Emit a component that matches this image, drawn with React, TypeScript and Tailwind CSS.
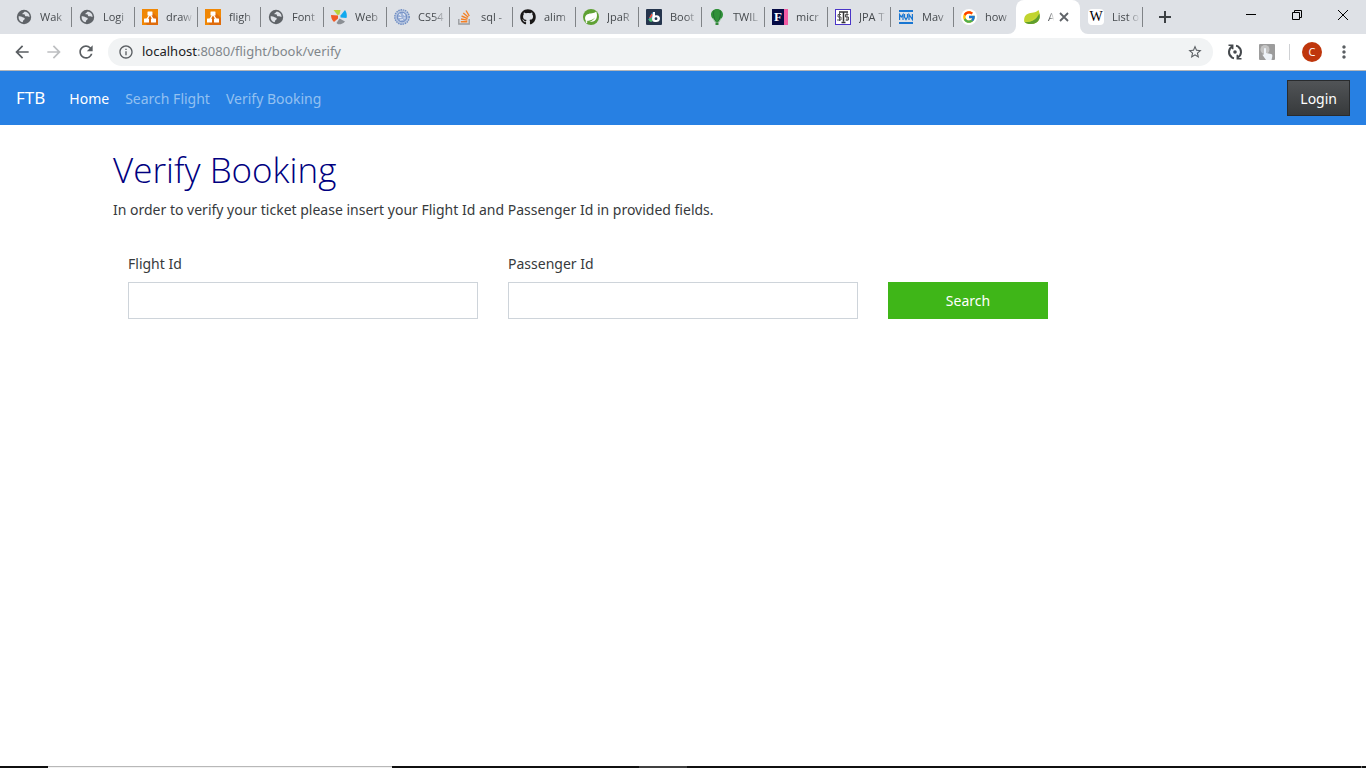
import React from "react";
import { FaGithub } from "react-icons/fa";
import { FcGoogle } from "react-icons/fc";
import { MdArrowBack, MdArrowForward, MdInfoOutline, MdMoreVert, MdRefresh, MdStarBorder } from "react-icons/md";

const GlobeIcon = () => (
  <svg viewBox="0 0 16 16" className="size-4">
    <circle cx="8" cy="8" r="7.2" fill="#5f6368" />
    <path d="M2.6 7.200c1.500.2 3 .1 4 1c.9.700 2 .3 2.200 1.500c.1 1-1.500 1-1.700 2c-.1.800-.1 1.300-.9 1.600C3.900 12.500 2.400 10.400 2.600 7.200z" fill="#dee1e6" />
    <path d="M8.200 2.800c1.600-.2 3.200.5 4.200 1.800c.9 1.100 1.100 2 1.100 3.300c-.8.400-1.200-.5-2-.6c-1-.1-2.200.3-2.500-.6c-.3-.7.300-1-.5-1.300c-1-.3-2 .2-2.200-.5c-.1-.8 1.700-.7 1.900-2.100z" fill="#dee1e6" />
  </svg>
);

const DrawIcon = () => (
  <svg viewBox="0 0 16 16" className="size-4">
    <path d="M0 0h16v16H0z" fill="#f08705" />
    <path d="M10 3l6 6v7H5l-2-3z" fill="#df6c0c" />
    <path d="M7.500 6L4.500 11M8.500 6l3 5" stroke="#fff" strokeWidth="1.400" />
    <rect x="5.500" y="2.500" width="5" height="4" rx=".5" fill="#fff" />
    <rect x="2" y="9.500" width="5" height="4" rx=".5" fill="#fff" />
    <rect x="9" y="9.500" width="5" height="4" rx=".5" fill="#fff" />
  </svg>
);

const WebIcon = () => (
  <svg viewBox="0 0 16 16" className="size-4">
    <path d="M2.500 1L9.500 1L8.500 5.500L6.500 6z" fill="#b9d438" />
    <path d="M9.500 6.500l4.500-5.500c1.800 2.700 2.200 5 1.500 8L9.500 8.500z" fill="#10a9ee" />
    <path d="M0 6l7 .5v3L3 13C1 11 0 9 0 6z" fill="#f25a25" />
    <path d="M8.500 9.500l5.500 3c-1.500 2-4 3-7 2.800L5.500 14z" fill="#8b8f94" />
  </svg>
);

const SealIcon = () => (
  <svg viewBox="0 0 16 16" className="size-4">
    <circle cx="8" cy="8" r="7.200" fill="#b9c7e0" stroke="#6e8dc4" strokeWidth="1.400" strokeDasharray="1.500 .8" />
    <circle cx="8" cy="8" r="4.800" fill="#9cb1d8" stroke="#5f80bd" strokeWidth=".8" />
    <path d="M5 5l2 1.500M9 4.500l2 2M4.500 8.500h3M9.500 9h2M6 11l3-.5" stroke="#e6ebf4" strokeWidth="1.200" />
  </svg>
);

const StackIcon = () => (
  <svg viewBox="0 0 16 16" className="size-4">
    <path d="M1.800 10v5h10.400v-5" fill="none" stroke="#9a9c9f" strokeWidth="1.400" />
    <path d="M3.800 12.700h6.500M4 10l6.400 1.100M4.600 7l6 2.600M6.300 4l5 4.200M9 1.500l3.300 5.500" stroke="#f48024" strokeWidth="1.400" />
  </svg>
);

const SpringIcon = () => (
  <svg viewBox="0 0 16 16" className="size-4">
    <circle cx="8" cy="8" r="8" fill="#5fa134" />
    <path d="M13.200 2.500c.7 2 1 3.700.6 5.500c-.7 3.800-3.500 4.900-6.300 4.700L3.800 13c4-.3 6.700-1.800 8.300-4.600C9.800 10.900 7 11.500 3 12.100C1.300 9.500 2 6.600 4.500 5.300c2.800-1.400 6.400-.3 8.700-2.800z" fill="#fff" />
    <circle cx="3.500" cy="13" r=".9" fill="#fff" />
  </svg>
);

const BootIcon = () => (
  <svg viewBox="0 0 16 16" className="size-4">
    <rect width="16" height="16" rx="1" fill="#25354d" />
    <path d="M6.500 3L2.500 10.500L4 12L7 9z" fill="#29a8e0" />
    <path d="M5.500 4.500L3 9l1.500.5L7 6z" fill="#f0503c" />
    <path d="M2.300 10.500l4-2v4.300H4z" fill="#52bd72" />
    <path d="M7 3h2v3.500c3-1 5 .5 5 3c0 2.700-2.300 4-5 3.500c-2 0-3-1-3-3z" fill="#fff" />
    <circle cx="10" cy="9.700" r="1.400" fill="#25354d" />
  </svg>
);

const BalloonIcon = () => (
  <svg viewBox="0 0 16 16" className="size-4">
    <path d="M8 0c3.500 0 6 2.500 6 5.800c0 2.900-2.500 5-4 7.200H6C4.500 10.800 2 8.700 2 5.800C2 2.500 4.500 0 8 0z" fill="#2f9139" />
    <path d="M5 1.500C3.800 5 5 9 6.700 13M11 1.500c1.200 3.500 0 7.500-1.700 11.500" stroke="#247130" fill="none" />
    <path d="M3.500 9l3 4M12.500 9l-3 4" stroke="#d0dfd4" strokeWidth=".7" />
    <path d="M6.500 13.300h3V16h-3z" fill="#33883b" />
  </svg>
);

const FIcon = () => (
  <span className="flex size-4 border-r-4 border-[#f25ba3] bg-[#050a45] pl-[2px] font-['Liberation_Serif',serif] text-[13px] leading-4 font-bold text-white">F</span>
);

const ScalesIcon = () => (
  <svg viewBox="0 0 16 16" className="size-4">
    <rect x=".5" y=".5" width="15" height="15" fill="#fff" stroke="#4a35c8" />
    <path d="M4 3h9M8.500 3v9.500M6.500 13.500h4" stroke="#333" strokeWidth="1.500" />
    <path d="M6 5.500H3v2.500h3v3H2M13.500 5.500h-3v2.500h3v3h-3M4.500 3v9M12 3v9" stroke="#555" strokeWidth="1" fill="none" />
  </svg>
);

const MavenIcon = () => (
  <svg viewBox="0 0 16 16" className="size-4">
    <path d="M1 2h14M1 14h14" stroke="#1976d2" strokeWidth="2" />
    <path d="M1.600 11V5.500L3.300 8L5 5.500V11M6.500 5v3L8 10.500L9.500 8V5M11 11V5.500l3.400 5V5" stroke="#1976d2" strokeWidth="1.200" fill="none" />
  </svg>
);

const GoogleIcon = () => (
  <span className="flex size-4 items-center justify-center rounded-full bg-white"><FcGoogle size={14} /></span>
);

const LeafIcon = () => (
  <svg viewBox="0 0 16 16" className="size-4">
    <path d="M14.500 1c1.300 3 1.800 6.500.8 9c-1.300 3.500-5 5.200-8.800 5c-2.500 0-5-1-6.200-2C-.3 9.500.5 6 4 4.700c3.500-1.300 7.500-.4 10.500-3.700z" fill="#c1d42f" />
    <path d="M15.300 4.500c.6 2.200.7 4 0 5.500c-1.300 3.500-5 5.200-8.800 5c-2.500 0-4.700-.8-5.700-1.800C8 13.200 12.500 10.500 15.300 4.500z" fill="#5f9e2f" />
    <path d="M.8 12.600c5-.3 9.200-2.300 12-6c-2 5-6 6.800-12 6z" fill="#c8d83a" />
  </svg>
);

const WikiIcon = () => (
  <span className="flex size-4 items-center justify-center rounded-sm bg-white font-['Liberation_Serif',serif] text-[14px] leading-4 text-black">W</span>
);

const tabs: { title: string; icon: React.ReactNode; active?: boolean; divider?: boolean }[] = [
  { title: "Wak", icon: <GlobeIcon /> },
  { title: "Logi", icon: <GlobeIcon />, divider: true },
  { title: "draw", icon: <DrawIcon />, divider: true },
  { title: "fligh", icon: <DrawIcon />, divider: true },
  { title: "Font", icon: <GlobeIcon />, divider: true },
  { title: "Web", icon: <WebIcon />, divider: true },
  { title: "CS54", icon: <SealIcon />, divider: true },
  { title: "sql -", icon: <StackIcon />, divider: true },
  { title: "alim", icon: <FaGithub size={16} color="#191717" />, divider: true },
  { title: "JpaR", icon: <SpringIcon />, divider: true },
  { title: "Boot", icon: <BootIcon />, divider: true },
  { title: "TWIL", icon: <BalloonIcon />, divider: true },
  { title: "micr", icon: <FIcon />, divider: true },
  { title: "JPA T", icon: <ScalesIcon />, divider: true },
  { title: "Mav", icon: <MavenIcon />, divider: true },
  { title: "how", icon: <GoogleIcon />, divider: true },
  { title: "A", icon: <LeafIcon />, active: true },
  { title: "List o", icon: <WikiIcon /> },
];

function TabStrip() {
  return (
    <div className="flex h-[34px] bg-[#dee1e6] pl-2">
      <div role="tablist" className="flex items-center">
        {tabs.map((tab, i) =>
          tab.active ? (
            <div key={i} role="tab" aria-selected="true" className="relative flex w-16 items-center self-stretch rounded-t-lg bg-white pl-2 text-[11px]">
              <svg viewBox="0 0 8 8" className="absolute bottom-0 -left-2 size-2" fill="#fff"><path d="M8 0v8H0a8 8 0 0 0 8-8z" /></svg>
              <svg viewBox="0 0 8 8" className="absolute -right-2 bottom-0 size-2" fill="#fff"><path d="M0 0v8h8a8 8 0 0 1-8-8z" /></svg>
              {tab.icon}
              <span className="ml-2 w-2 mask-r-from-0% mask-r-to-80% text-[#3c4043]">{tab.title}</span>
              <button aria-label="Close tab" className="flex size-4 items-center justify-center">
                <svg viewBox="0 0 10 10" className="size-[10px]"><path d="M1 1l8 8M9 1L1 9" stroke="#5f6368" strokeWidth="1.800" /></svg>
              </button>
            </div>
          ) : (
            <div key={i} role="tab" aria-selected="false" className="flex w-[63px] items-center">
              <span className={tab.divider ? "h-5 w-px bg-[#808387]" : "h-5 w-px"} />
              <span className="ml-[7px] flex shrink-0">{tab.icon}</span>
              <span className="ml-2 flex-1 mask-r-from-50% mask-r-to-90% text-[11px] whitespace-nowrap text-[#45494d]">{tab.title}</span>
            </div>
          )
        )}
        <span className="-ml-px h-5 w-px bg-[#808387]" />
      </div>
      <button aria-label="New tab" className="ml-2 flex w-7 items-center justify-center">
        <svg viewBox="0 0 12 12" className="size-3"><path d="M6 0v12M0 6h12" stroke="#3c4043" strokeWidth="2" /></svg>
      </button>
      <div className="ml-auto flex h-[30px]">
        <button aria-label="Minimize" className="flex w-[46px] items-center justify-center">
          <svg viewBox="0 0 10 10" className="size-[10px]"><path d="M0 4.500h10" stroke="#000" /></svg>
        </button>
        <button aria-label="Restore" className="flex w-[46px] items-center justify-center">
          <svg viewBox="0 0 10 10" className="size-[10px]" fill="none" stroke="#000"><path d="M.5 2.500h7v7h-7zM2.500 2.500v-2h7v7h-2" /></svg>
        </button>
        <button aria-label="Close" className="flex w-[46px] items-center justify-center">
          <svg viewBox="0 0 10 10" className="size-[10px]"><path d="M0 0l10 10M10 0L0 10" stroke="#000" /></svg>
        </button>
      </div>
    </div>
  );
}

function Toolbar() {
  return (
    <div className="flex h-[37px] items-center border-b border-[#b4b6b9] bg-white px-3 text-[#5a5e62]">
      <button aria-label="Back"><MdArrowBack size={20} /></button>
      <button aria-label="Forward" className="ml-3 text-[#bdbfc1]"><MdArrowForward size={20} /></button>
      <button aria-label="Reload" className="ml-3"><MdRefresh size={20} /></button>
      <div className="ml-3 flex h-7 flex-1 items-center rounded-full bg-[#f1f3f4] px-[10px]">
        <MdInfoOutline size={16} />
        <span className="ml-2 flex-1 font-['Noto_Sans',sans-serif] text-[13px] text-[#80868b]"><span className="text-[#202124]">localhost</span>:8080/flight/book/verify</span>
        <button aria-label="Bookmark"><MdStarBorder size={16} /></button>
      </div>
      <button aria-label="Sync extension" className="ml-[14px]">
        <svg viewBox="0 0 16 16" className="size-4" fill="none" stroke="#45494d" strokeWidth="2">
          <path d="M5.500 2.500A6.200 6.200 0 0 0 5 13.400M10.500 13.500A6.200 6.200 0 0 0 11 2.600M9 1.800q1.500.2 2.600 1M7 14.200q-1.500-.2-2.600-1" />
          <path d="M1.500 1.300h4.200v4M14.500 14.700h-4.200v-4" strokeWidth="1.500" />
          <circle cx="8" cy="8" r="1.800" fill="#45494d" stroke="none" />
        </svg>
      </button>
      <button aria-label="Touch extension" className="ml-4">
        <svg viewBox="0 0 16 16" className="size-4">
          <rect width="16" height="16" rx="1" fill="#9c9c9c" />
          <circle cx="6" cy="5.500" r="4.500" fill="#c4c4c4" />
          <path d="M5 5c0-1.500 2-1.500 2 0v4l5 1c1.500.3 1.500 1.500 1.200 3L12.500 16H7l-3.500-5c.5-1 1-.8 1.500-.2z" fill="#eef3f8" />
        </svg>
      </button>
      <span className="ml-[14px] h-4 w-px bg-[#cfd1d4]" />
      <button aria-label="Profile" className="ml-3 flex size-5 items-center justify-center rounded-full bg-[#bf360c] text-[11px] text-white">C</button>
      <button aria-label="Menu" className="ml-3"><MdMoreVert size={20} /></button>
    </div>
  );
}

export default function App() {
  return (
    <div className="flex min-h-screen flex-col bg-white font-['Open_Sans','Noto_Sans',sans-serif]">
      <TabStrip />
      <Toolbar />
      <nav className="flex h-[54px] items-center bg-[#2780e3] px-4 font-['Noto_Sans',sans-serif] text-[14px] text-[#93c0f1]">
        <a href="#" className="mr-6 text-[17px] text-white">FTB</a>
        <a href="#" className="mr-4 text-white">Home</a>
        <a href="#" className="mr-4">Search Flight</a>
        <a href="#">Verify Booking</a>
        <button className="ml-auto h-9 border border-[#292b2d] bg-linear-to-b from-[#515457] to-[#373a3c] px-3 text-white">Login</button>
      </nav>
      <main className="mx-auto w-full max-w-[1140px] flex-1 pt-6 font-['Noto_Sans',sans-serif] text-[14px] leading-[22px] text-[#373a3c]">
        <h1 className="font-['Open_Sans',sans-serif] text-[35px] leading-[42px] font-light text-[#000080]">Verify Booking</h1>
        <p className="mt-2">In order to verify your ticket please insert your Flight Id and Passenger Id in provided fields.</p>
        <form className="mt-8 flex items-end gap-[30px] px-[15px]" onSubmit={(e) => e.preventDefault()}>
          <div className="flex w-[350px] flex-col gap-[7px]">
            <label htmlFor="flight">Flight Id</label>
            <input id="flight" className="h-[37px] border border-[#ced4da] px-3 outline-none" />
          </div>
          <div className="flex w-[350px] flex-col gap-[7px]">
            <label htmlFor="passenger">Passenger Id</label>
            <input id="passenger" className="h-[37px] border border-[#ced4da] px-3 outline-none" />
          </div>
          <button className="h-[37px] w-40 bg-[#3fb618] text-white">Search</button>
        </form>
      </main>
      <footer className="flex h-[2px] bg-[#101010]">
        <span className="ml-12 w-[344px] border-t border-[#b8b8b8] bg-[#f2f2f2]" />
        <span className="ml-[247px] w-12 bg-[#404040]" />
        <span className="mr-1 ml-auto w-px bg-[#707070]" />
      </footer>
    </div>
  );
}
